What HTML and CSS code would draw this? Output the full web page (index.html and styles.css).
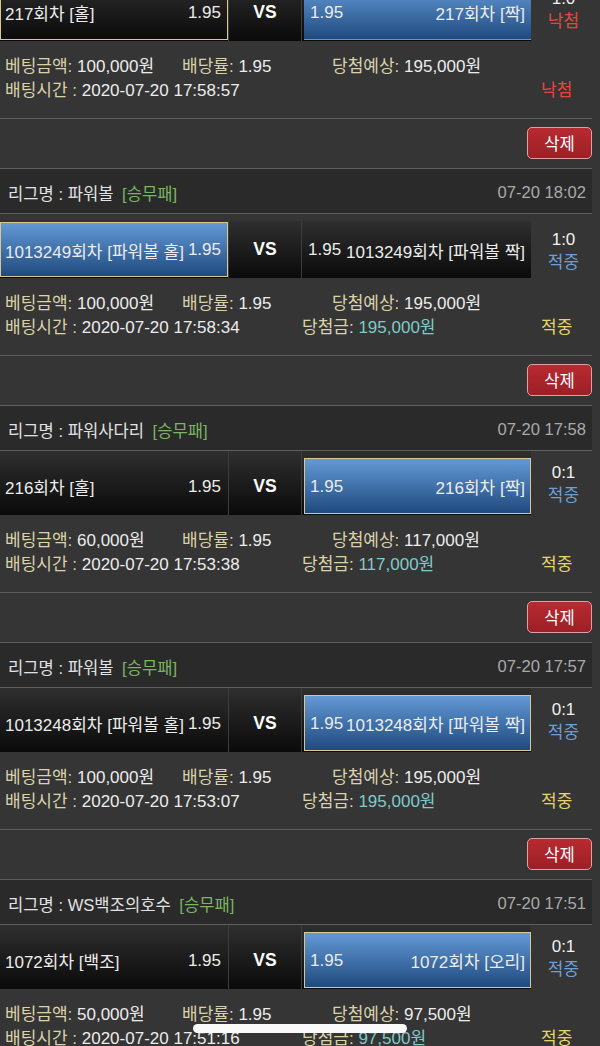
FILE: index.html
```html
<!DOCTYPE html>
<html lang="ko">
<head>
<meta charset="utf-8">
<title>베팅내역</title>
<link rel="stylesheet" href="styles.css">
</head>
<body>
<div class="page">

  <div class="bet">
    <div class="bet-head"><span class="league">리그명 : 파워사다리 <span class="type">[승무패]</span></span><span class="date">07-20 18:03</span></div>
    <div class="match">
      <div class="cell home"><div class="box pick"><span>217회차 [홀]</span><span>1.95</span></div></div>
      <div class="cell vs">VS</div>
      <div class="cell away"><div class="box win"><span>1.95</span><span>217회차 [짝]</span></div></div>
      <div class="result"><span class="score">1:0</span><span class="lose">낙첨</span></div>
    </div>
    <div class="info">
      <div class="line1"><span><span class="lbl">베팅금액:</span> 100,000원</span><span><span class="lbl">배당률:</span> 1.95</span><span><span class="lbl">당첨예상:</span> 195,000원</span></div>
      <div class="line2"><span><span class="lbl">배팅시간 :</span> 2020-07-20 17:58:57</span><span></span><span class="lose">낙첨</span></div>
    </div>
    <div class="actions"><button class="del">삭제</button></div>
  </div>

  <div class="bet">
    <div class="bet-head"><span class="league">리그명 : 파워볼 <span class="type">[승무패]</span></span><span class="date">07-20 18:02</span></div>
    <div class="match offset">
      <div class="cell home"><div class="box pick win"><span>1013249회차 [파워볼 홀]</span><span>1.95</span></div></div>
      <div class="cell vs">VS</div>
      <div class="cell away"><div class="box"><span>1.95</span><span>1013249회차 [파워볼 짝]</span></div></div>
      <div class="result"><span class="score">1:0</span><span class="hit">적중</span></div>
    </div>
    <div class="info">
      <div class="line1"><span><span class="lbl">베팅금액:</span> 100,000원</span><span><span class="lbl">배당률:</span> 1.95</span><span><span class="lbl">당첨예상:</span> 195,000원</span></div>
      <div class="line2"><span><span class="lbl">배팅시간 :</span> 2020-07-20 17:58:34</span><span><span class="lbl">당첨금:</span> <span class="prize">195,000원</span></span><span class="won">적중</span></div>
    </div>
    <div class="actions"><button class="del">삭제</button></div>
  </div>

  <div class="bet">
    <div class="bet-head"><span class="league">리그명 : 파워사다리 <span class="type">[승무패]</span></span><span class="date">07-20 17:58</span></div>
    <div class="match">
      <div class="cell home"><div class="box"><span>216회차 [홀]</span><span>1.95</span></div></div>
      <div class="cell vs">VS</div>
      <div class="cell away"><div class="box pick win"><span>1.95</span><span>216회차 [짝]</span></div></div>
      <div class="result"><span class="score">0:1</span><span class="hit">적중</span></div>
    </div>
    <div class="info">
      <div class="line1"><span><span class="lbl">베팅금액:</span> 60,000원</span><span><span class="lbl">배당률:</span> 1.95</span><span><span class="lbl">당첨예상:</span> 117,000원</span></div>
      <div class="line2"><span><span class="lbl">배팅시간 :</span> 2020-07-20 17:53:38</span><span><span class="lbl">당첨금:</span> <span class="prize">117,000원</span></span><span class="won">적중</span></div>
    </div>
    <div class="actions"><button class="del">삭제</button></div>
  </div>

  <div class="bet">
    <div class="bet-head"><span class="league">리그명 : 파워볼 <span class="type">[승무패]</span></span><span class="date">07-20 17:57</span></div>
    <div class="match">
      <div class="cell home"><div class="box"><span>1013248회차 [파워볼 홀]</span><span>1.95</span></div></div>
      <div class="cell vs">VS</div>
      <div class="cell away"><div class="box pick win"><span>1.95</span><span>1013248회차 [파워볼 짝]</span></div></div>
      <div class="result"><span class="score">0:1</span><span class="hit">적중</span></div>
    </div>
    <div class="info">
      <div class="line1"><span><span class="lbl">베팅금액:</span> 100,000원</span><span><span class="lbl">배당률:</span> 1.95</span><span><span class="lbl">당첨예상:</span> 195,000원</span></div>
      <div class="line2"><span><span class="lbl">배팅시간 :</span> 2020-07-20 17:53:07</span><span><span class="lbl">당첨금:</span> <span class="prize">195,000원</span></span><span class="won">적중</span></div>
    </div>
    <div class="actions"><button class="del">삭제</button></div>
  </div>

  <div class="bet">
    <div class="bet-head"><span class="league">리그명 : WS백조의호수 <span class="type">[승무패]</span></span><span class="date">07-20 17:51</span></div>
    <div class="match">
      <div class="cell home"><div class="box"><span>1072회차 [백조]</span><span>1.95</span></div></div>
      <div class="cell vs">VS</div>
      <div class="cell away"><div class="box pick win"><span>1.95</span><span>1072회차 [오리]</span></div></div>
      <div class="result"><span class="score">0:1</span><span class="hit">적중</span></div>
    </div>
    <div class="info">
      <div class="line1"><span><span class="lbl">베팅금액:</span> 50,000원</span><span><span class="lbl">배당률:</span> 1.95</span><span><span class="lbl">당첨예상:</span> 97,500원</span></div>
      <div class="line2"><span><span class="lbl">배팅시간 :</span> 2020-07-20 17:51:16</span><span><span class="lbl">당첨금:</span> <span class="prize">97,500원</span></span><span class="won">적중</span></div>
    </div>
    <div class="actions"><button class="del">삭제</button></div>
  </div>

</div>
<div class="home-indicator"></div>
</body>
</html>
```

FILE: styles.css
```css
html, body {
  margin: 0;
  padding: 0;
  background: #353535;
  height: 100%;
  overflow: hidden;
}
body {
  font-family: "Liberation Sans", "Noto Sans CJK KR", sans-serif;
  font-size: 17px;
  color: #ececec;
}
.page {
  width: 592px;
  margin-top: -69px;
}
.bet-head {
  border-top: 1px solid #5e5e5e;
  border-bottom: 1px solid #5e5e5e;
  background: #2a2a2a;
  display: flex;
  align-items: center;
  justify-content: space-between;
  padding: 4px 6px 0 8px;
  box-sizing: content-box;
  height: 40px;
  font-size: 16.6px;
}
.league { color: #e2e2e2; }
.type { color: #7ab560; margin-left: 4px; }
.date { color: #a9a9a9; }

.match {
  display: grid;
  grid-template-columns: 229px 73px 229px 61px;
  height: 64px;
  box-sizing: border-box;
}
.cell {
  background: linear-gradient(to bottom, #2f2f2f, #0a0a0a);
  box-sizing: border-box;
  padding: 7px 0 1px;
  white-space: nowrap;
  min-width: 0;
}
.match.offset { padding-top: 7px; }
.match.offset .cell { padding: 1px 0; }
.home { border-right: 1px solid #3d3d3d; }
.vs {
  display: flex;
  align-items: center;
  justify-content: center;
  font-weight: bold;
  font-size: 17.5px;
  color: #fafafa;
  border-right: 1px solid #3d3d3d;
}
.away { padding-left: 2px; }
.box {
  height: 100%;
  box-sizing: border-box;
  display: flex;
  align-items: center;
  justify-content: space-between;
  border: 1px solid transparent;
  padding-top: 1px;
}
.home .box { padding-left: 4px; padding-right: 6px; }
.away .box { padding-left: 5px; padding-right: 5px; }
.box.win {
  background: linear-gradient(to bottom, #6399d6, #1f4a7e);
}
.box.pick {
  border-color: #d9c98c;
}
.result {
  display: flex;
  flex-direction: column;
  align-items: center;
  justify-content: center;
  line-height: 23px;
  color: #f0f0f0;
  padding: 2px 0 0 4px;
}
.hit { color: #6b9fd8; }
.lose { color: #e4463f; }

.info {
  height: 77px;
  box-sizing: border-box;
  padding: 14px 0 0 5px;
  line-height: 24px;
  white-space: nowrap;
}
.line1 {
  display: grid;
  grid-template-columns: 177px 150px auto;
}
.line2 {
  display: grid;
  grid-template-columns: 297px 239px auto;
}
.lbl { color: #dad2a9; }
.prize { color: #7fcaca; }
.won { color: #e6d66a; }

.actions {
  height: 50px;
  border-top: 1px solid #5e5e5e;
  box-sizing: border-box;
  padding-top: 8px;
  display: flex;
  justify-content: flex-end;
}
.del {
  width: 65px;
  height: 32px;
  border: 1px solid #dba2a2;
  border-radius: 5px;
  background: linear-gradient(to bottom, #b82a31, #9d1f26);
  color: #fff;
  font-family: "Liberation Sans", "Noto Sans CJK KR", sans-serif;
  font-size: 16.6px;
  padding: 0;
}
.home-indicator {
  position: fixed;
  left: 193px;
  top: 1024px;
  width: 214px;
  height: 9px;
  border-radius: 5px;
  background: #fafafa;
}
```
